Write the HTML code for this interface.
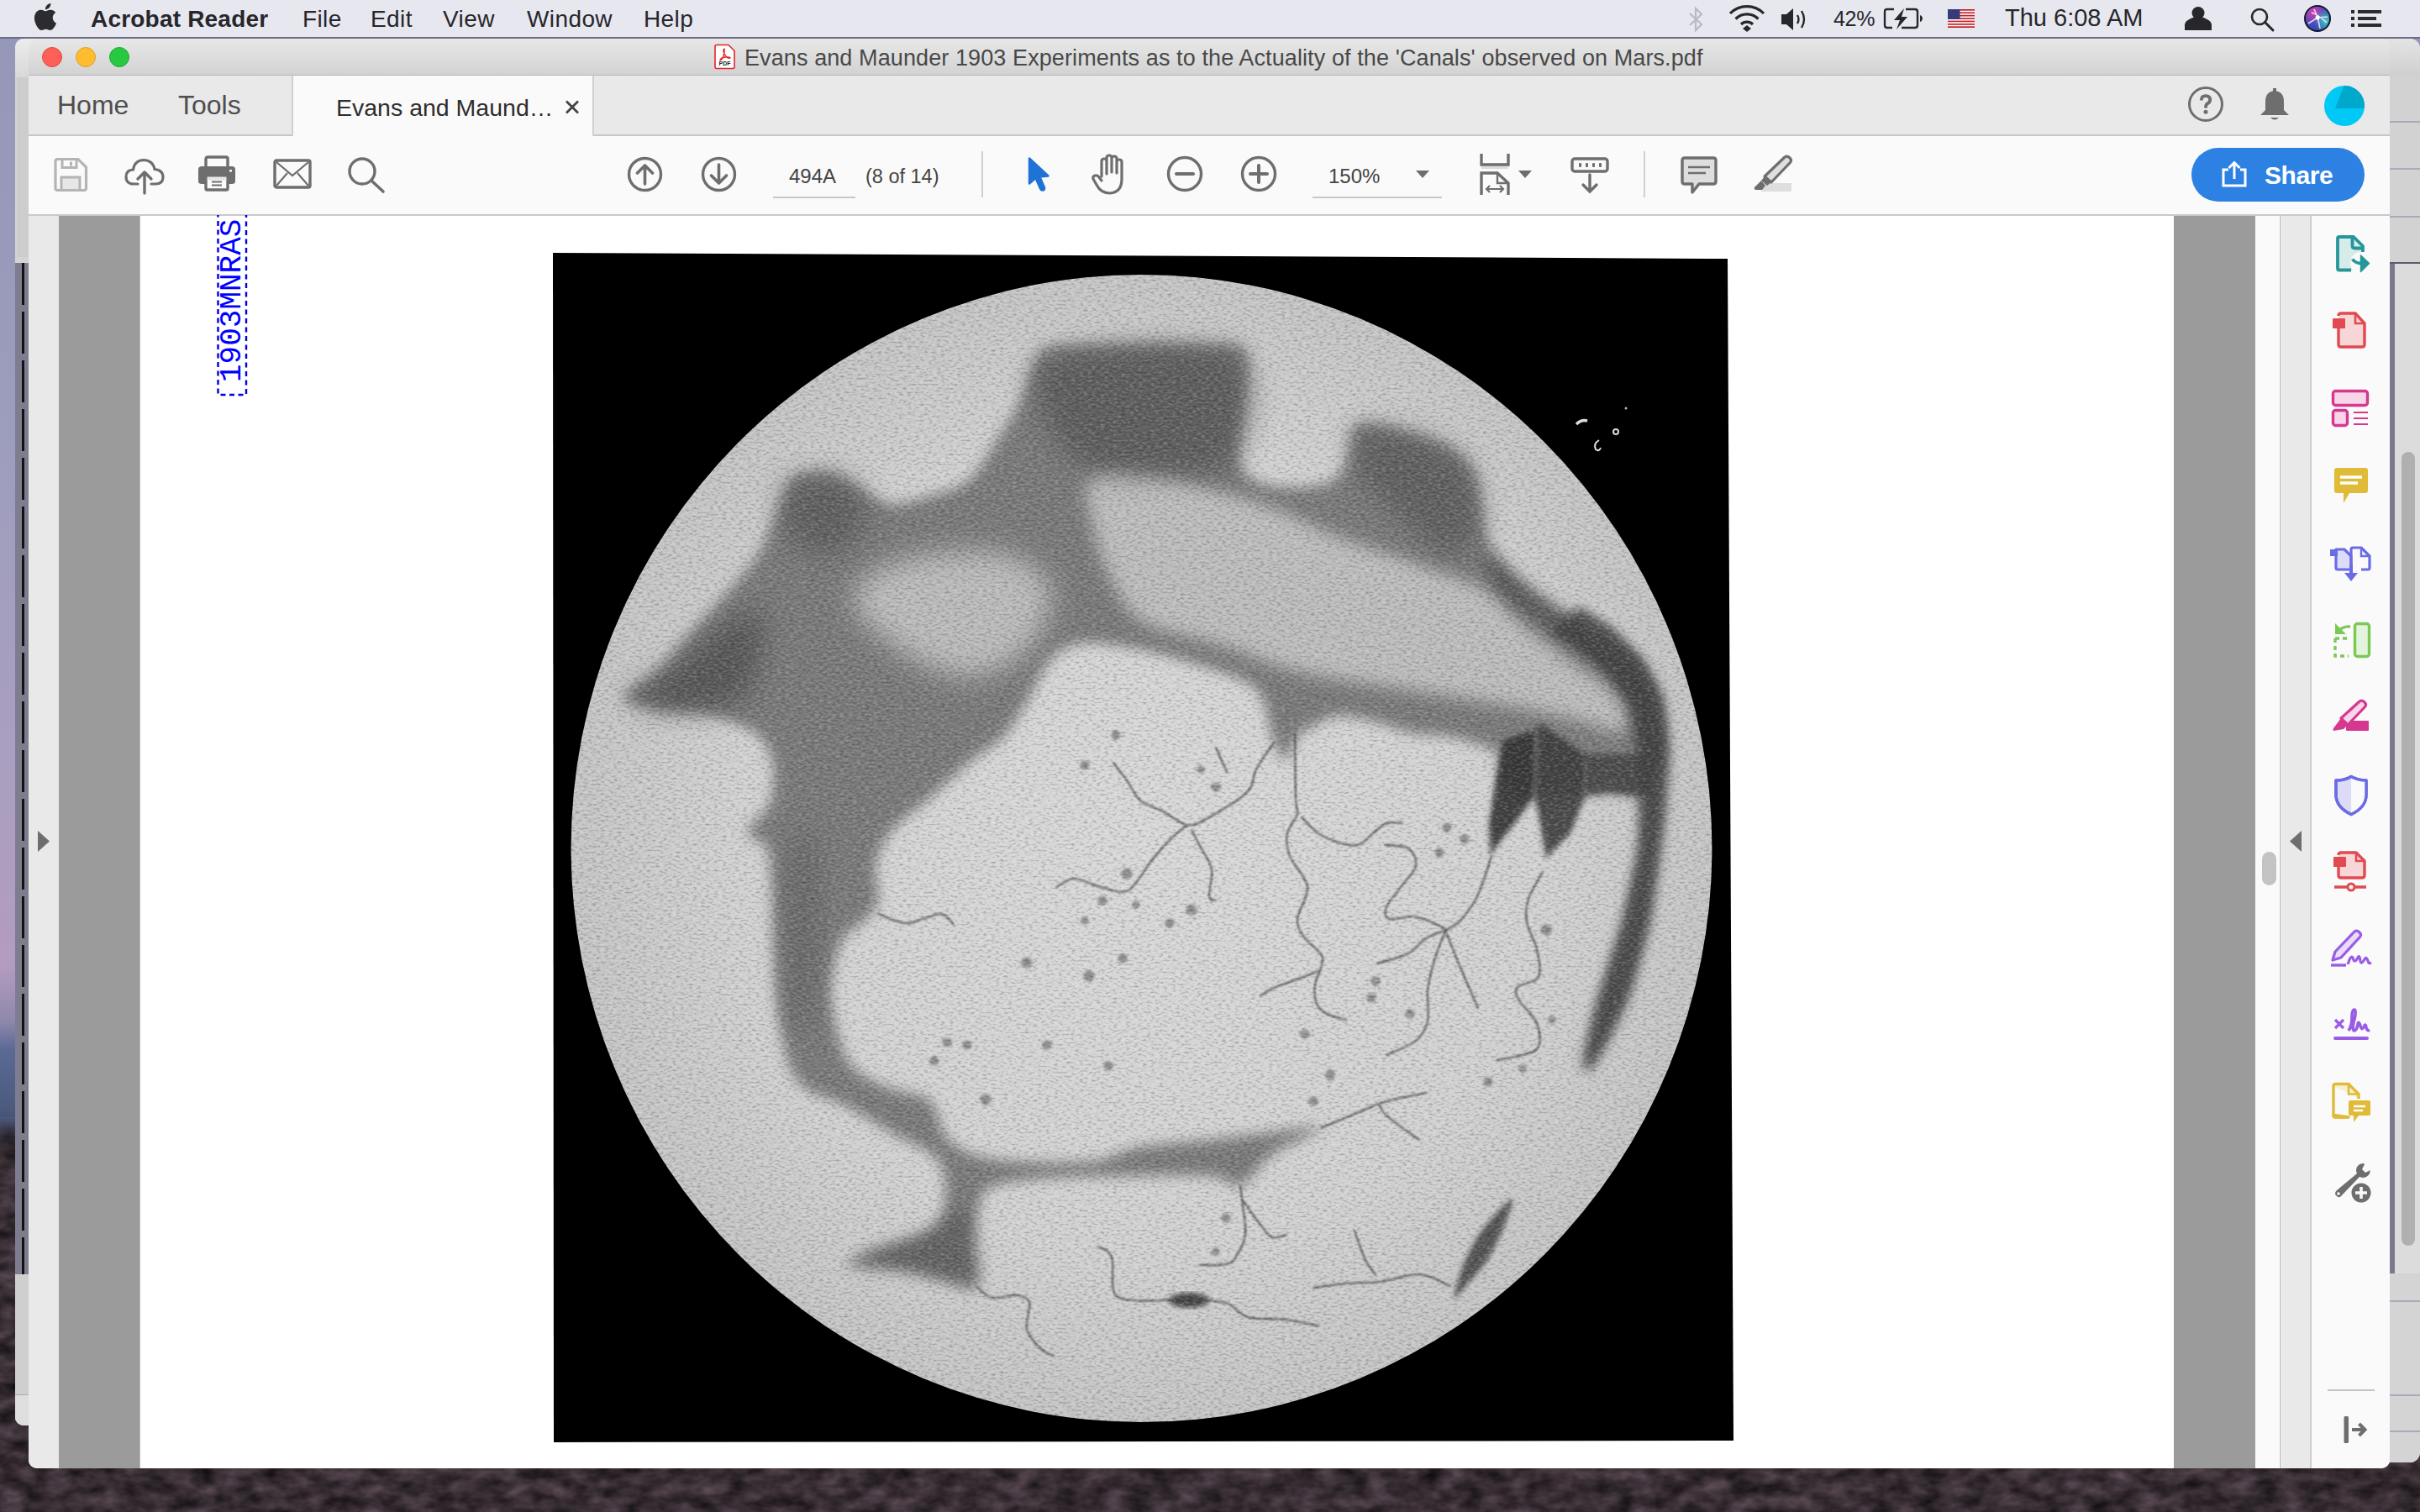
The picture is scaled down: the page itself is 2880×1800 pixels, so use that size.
<!DOCTYPE html>
<html><head><meta charset="utf-8">
<style>
*{margin:0;padding:0;box-sizing:border-box}
html,body{width:2880px;height:1800px;overflow:hidden;background:#3a3036;font-family:"Liberation Sans",sans-serif}
.a{position:absolute}
.t{position:absolute;line-height:1;white-space:nowrap}
svg{position:absolute;overflow:visible}
</style></head><body>
<!-- desktop -->
<div class="a" style="left:0;top:0;width:2880px;height:1800px;background:linear-gradient(180deg,#9497b8 0px,#9c9dbd 500px,#aa9fc0 900px,#b39cbf 1150px,#9088ac 1215px,#5a6a94 1250px,#4c5a7e 1320px,#3f343b 1370px,#3a2e34 1800px)"></div>
<svg style="left:0;top:1330px" width="2880" height="470" viewBox="0 0 2880 470"><defs><filter id="rock" x="0" y="0" width="100%" height="100%" color-interpolation-filters="sRGB"><feTurbulence type="fractalNoise" baseFrequency="0.035 0.06" numOctaves="3" seed="11"/><feColorMatrix type="matrix" values="0 0 0 0.42 0.01  0 0 0 0.34 0.01  0 0 0 0.39 0.01  0 0 0 0 1"/></filter><linearGradient id="rockfade" x1="0" y1="0" x2="0" y2="1"><stop offset="0" stop-color="#4b5a80"/><stop offset="0.08" stop-color="#3a3036" stop-opacity="0"/></linearGradient></defs><rect width="2880" height="470" fill="#3a2f35"/><rect width="2880" height="470" filter="url(#rock)" opacity="0.9"/><rect width="2880" height="470" fill="url(#rockfade)"/></svg>

<!-- background window left -->
<div class="a" style="left:18px;top:46px;width:40px;height:1651px;border-radius:10px 0 0 10px;overflow:hidden;background:#d4d4d4">
  <div class="a" style="left:0;top:0;width:40px;height:46px;background:linear-gradient(#ececec,#d8d8d8)"></div>
  <div class="a" style="left:2px;top:46px;width:38px;height:214px;background:#cdcdcd;border-right:1px solid #b0b0b0"></div>
  <div class="a" style="left:0;top:267px;width:40px;height:1204px;background:#7e7d90"></div>
  <div class="a" style="left:8px;top:267px;width:3px;height:1204px;background:repeating-linear-gradient(180deg,#111 0 50px,transparent 50px 58px)"></div>
  <div class="a" style="left:0;top:1471px;width:40px;height:180px;background:#cfcfcf"></div>
  <div class="a" style="left:0;top:1614px;width:40px;height:37px;background:#dedede;border-top:1px solid #a8a8b8"></div>
</div>
<!-- background window right -->
<div class="a" style="left:2800px;top:46px;width:80px;height:1695px;border-radius:0 12px 12px 0;overflow:hidden;background:#d6d6d6">
  <div class="a" style="left:0;top:0;width:80px;height:45px;background:linear-gradient(#e4e4e4,#cfcfcf)"></div>
  <div class="a" style="left:0;top:45px;width:80px;height:222px;background:#d2d2d2"></div>
  <div class="a" style="left:0;top:98px;width:80px;height:2px;background:#a9a9bd"></div>
  <div class="a" style="left:0;top:154px;width:80px;height:2px;background:#a9a9bd"></div>
  <div class="a" style="left:0;top:211px;width:80px;height:2px;background:#a9a9bd"></div>
  <div class="a" style="left:0;top:266px;width:80px;height:2px;background:#5a5a70"></div>
  <div class="a" style="left:44px;top:268px;width:6px;height:1202px;background:#7a7a8e"></div>
  <div class="a" style="left:50px;top:268px;width:30px;height:1202px;background:#dcdcdc"></div>
  <div class="a" style="left:58px;top:492px;width:16px;height:945px;border-radius:8px;background:#b0b0b0"></div>
  <div class="a" style="left:0;top:1470px;width:80px;height:225px;background:#d4d4d4"></div>
  <div class="a" style="left:0;top:1502px;width:80px;height:2px;background:#a9a9bd"></div>
  <div class="a" style="left:0;top:1614px;width:80px;height:2px;background:#a9a9bd"></div>
  <div class="a" style="left:0;top:1657px;width:80px;height:2px;background:#a9a9bd"></div>
</div>

<!-- menubar -->
<div class="a" style="left:0;top:0;width:2880px;height:44px;background:#e7e7ef"></div>
<div class="a" style="left:0;top:44px;width:2880px;height:2px;background:#6c6c86"></div>

<!-- main window -->
<div class="a" id="win" style="left:34px;top:46px;width:2810px;height:1702px;border-radius:10px;overflow:hidden;background:#fafafa">
  <!-- titlebar -->
  <div class="a" style="left:0;top:0;width:2810px;height:44px;background:linear-gradient(#e8e8e8,#d2d2d2);border-bottom:1px solid #b5b5b5"></div>
  <!-- tabbar -->
  <div class="a" style="left:0;top:44px;width:2810px;height:72px;background:#e9e9e9;border-bottom:2px solid #c6c6c6"></div>
  <div class="a" style="left:313px;top:44px;width:360px;height:74px;background:#fafafa;border-left:2px solid #cfcfcf;border-right:2px solid #cfcfcf"></div>
  <!-- toolbar -->
  <div class="a" style="left:0;top:116px;width:2810px;height:95px;background:#fafafa;border-bottom:2px solid #c9c9c9"></div>
  <div class="a" style="left:315px;top:113px;width:356px;height:5px;background:#fafafa"></div>
  <!-- document area -->
  <div class="a" style="left:0;top:211px;width:36px;height:1491px;background:#e9e9e9"></div>
  <div class="a" style="left:36px;top:211px;width:96px;height:1491px;background:#9b9b9b"></div>
  <div class="a" style="left:132px;top:211px;width:2421px;height:1491px;background:#ffffff;border-left:1px solid #b9b9b9"></div>
  <div class="a" style="left:2553px;top:211px;width:97px;height:1491px;background:#9b9b9b"></div>
  <div class="a" style="left:2650px;top:211px;width:31px;height:1491px;background:#fafafa;border-right:2px solid #cdcdcd"></div>
  <div class="a" style="left:2682px;top:211px;width:35px;height:1491px;background:#e9e9e9;border-right:2px solid #cdcdcd"></div>
  <div class="a" style="left:2719px;top:211px;width:91px;height:1491px;background:#fafafa"></div>
</div>
<!--MARS-->
<svg class="a" style="left:0;top:0" width="2880" height="1800" viewBox="0 0 2880 1800">
<defs>
<filter id="b3" x="-10%" y="-10%" width="120%" height="120%"><feGaussianBlur stdDeviation="3"/></filter>
<filter id="b6" x="-10%" y="-10%" width="120%" height="120%"><feGaussianBlur stdDeviation="6"/></filter>
<filter id="b8" x="-10%" y="-10%" width="120%" height="120%"><feGaussianBlur stdDeviation="8"/></filter>
<filter id="b10" x="-20%" y="-20%" width="140%" height="140%"><feGaussianBlur stdDeviation="10"/></filter>
<filter id="b16" x="-30%" y="-30%" width="160%" height="160%"><feGaussianBlur stdDeviation="16"/></filter>
<filter id="b1" x="-5%" y="-5%" width="110%" height="110%"><feGaussianBlur stdDeviation="0.8"/></filter>
<filter id="b2" x="-50%" y="-50%" width="200%" height="200%"><feGaussianBlur stdDeviation="1.8"/></filter>
<radialGradient id="dg" cx="1358" cy="1010" r="683" gradientUnits="userSpaceOnUse">
<stop offset="0" stop-color="#d8d8d8"/><stop offset="0.7" stop-color="#d1d1d1"/><stop offset="1" stop-color="#c4c4c4"/></radialGradient>
<filter id="grain" color-interpolation-filters="sRGB" filterUnits="userSpaceOnUse" x="670" y="320" width="1380" height="1380">
<feTurbulence type="fractalNoise" baseFrequency="0.2 0.42" numOctaves="2" seed="7" result="n0"/><feGaussianBlur in="n0" stdDeviation="0.6" result="n"/>
<feColorMatrix in="n" type="matrix" values="0.32 0 0 0 0.34  0.32 0 0 0 0.34  0.32 0 0 0 0.34  0 0 0 0 1" result="g"/>
<feBlend in="SourceGraphic" in2="g" mode="overlay" result="b"/>
<feComposite in="b" in2="SourceGraphic" operator="in"/>
</filter>
<clipPath id="disk"><ellipse cx="1358.5" cy="1010" rx="679" ry="683"/></clipPath>
</defs>
<polygon points="658,301 2056,308 2063,1715 659,1717" fill="#000"/>
<g fill="none" stroke="#ddd" stroke-width="2"><path d="M1876,505 Q1882,499 1889,501" stroke-width="3.5"/><circle cx="1923" cy="514" r="3"/><path d="M1903,524 Q1896,528 1899,535 Q1903,538 1905,533"/></g><circle cx="1935" cy="486" r="1.5" fill="#bbb"/>
<g filter="url(#grain)">
<ellipse cx="1358.5" cy="1010" rx="679" ry="683" fill="url(#dg)"/>
<g clip-path="url(#disk)">
<path d="M742.0,830.0 C742.0,822.2 768.3,811.2 782.0,798.0 C795.7,784.8 809.2,767.5 824.0,751.0 C838.8,734.5 857.7,714.7 871.0,699.0 C884.3,683.3 894.5,673.5 904.0,657.0 C913.5,640.5 921.0,614.8 928.0,600.0 C935.0,585.2 935.8,574.2 946.0,568.0 C956.2,561.8 975.7,560.7 989.0,563.0 C1002.3,565.3 1014.3,575.8 1026.0,582.0 C1037.7,588.2 1045.7,598.5 1059.0,600.0 C1072.3,601.5 1090.3,595.7 1106.0,591.0 C1121.7,586.3 1139.7,583.0 1153.0,572.0 C1166.3,561.0 1175.8,540.7 1186.0,525.0 C1196.2,509.3 1206.2,494.3 1214.0,478.0 C1221.8,461.7 1226.7,437.8 1233.0,427.0 C1239.3,416.2 1238.0,415.8 1252.0,413.0 C1266.0,410.2 1287.3,410.5 1317.0,410.0 C1346.7,409.5 1402.5,408.8 1430.0,410.0 C1457.5,411.2 1473.7,404.0 1482.0,417.0 C1490.3,430.0 1481.2,465.8 1480.0,488.0 C1478.8,510.2 1471.7,535.5 1475.0,550.0 C1478.3,564.5 1487.5,570.0 1500.0,575.0 C1512.5,580.0 1535.0,580.8 1550.0,580.0 C1565.0,579.2 1580.8,576.7 1590.0,570.0 C1599.2,563.3 1601.3,550.5 1605.0,540.0 C1608.7,529.5 1605.8,512.8 1612.0,507.0 C1618.2,501.2 1629.2,503.2 1642.0,505.0 C1654.8,506.8 1675.0,513.3 1689.0,518.0 C1703.0,522.7 1715.2,526.0 1726.0,533.0 C1736.8,540.0 1747.7,548.0 1754.0,560.0 C1760.3,572.0 1760.8,590.5 1764.0,605.0 C1767.2,619.5 1766.0,632.8 1773.0,647.0 C1780.0,661.2 1792.7,677.3 1806.0,690.0 C1819.3,702.7 1837.3,712.8 1853.0,723.0 C1868.7,733.2 1886.0,742.5 1900.0,751.0 C1914.0,759.5 1926.0,764.7 1937.0,774.0 C1948.0,783.3 1958.8,794.5 1966.0,807.0 C1973.2,819.5 1977.0,833.3 1980.0,849.0 C1983.0,864.7 1983.8,882.5 1984.0,901.0 C1984.2,919.5 1982.5,941.3 1981.0,960.0 C1979.5,978.7 1978.2,989.7 1975.0,1013.0 C1971.8,1036.3 1968.5,1070.5 1962.0,1100.0 C1955.5,1129.5 1944.3,1166.7 1936.0,1190.0 C1927.7,1213.3 1919.7,1225.8 1912.0,1240.0 C1904.3,1254.2 1894.7,1271.3 1890.0,1275.0 C1885.3,1278.7 1882.3,1274.8 1884.0,1262.0 C1885.7,1249.2 1892.2,1225.0 1900.0,1198.0 C1907.8,1171.0 1922.7,1130.8 1931.0,1100.0 C1939.3,1069.2 1946.5,1036.3 1950.0,1013.0 C1953.5,989.7 1953.7,971.0 1952.0,960.0 C1950.3,949.0 1950.3,949.5 1940.0,947.0 C1929.7,944.5 1903.3,944.8 1890.0,945.0 C1876.7,945.2 1870.0,947.2 1860.0,948.0 C1850.0,948.8 1840.0,950.5 1830.0,950.0 C1820.0,949.5 1807.5,950.0 1800.0,945.0 C1792.5,940.0 1788.3,928.3 1785.0,920.0 C1781.7,911.7 1789.7,902.2 1780.0,895.0 C1770.3,887.8 1743.3,880.7 1727.0,877.0 C1710.7,873.3 1697.2,876.0 1682.0,873.0 C1666.8,870.0 1651.2,862.5 1636.0,859.0 C1620.8,855.5 1602.3,851.5 1591.0,852.0 C1579.7,852.5 1575.7,858.2 1568.0,862.0 C1560.3,865.8 1551.3,867.8 1545.0,875.0 C1538.7,882.2 1535.0,904.2 1530.0,905.0 C1525.0,905.8 1518.7,889.2 1515.0,880.0 C1511.3,870.8 1510.5,858.8 1508.0,850.0 C1505.5,841.2 1505.2,833.8 1500.0,827.0 C1494.8,820.2 1492.2,815.8 1477.0,809.0 C1461.8,802.2 1431.7,792.5 1409.0,786.0 C1386.3,779.5 1361.8,773.3 1341.0,770.0 C1320.2,766.7 1299.2,763.3 1284.0,766.0 C1268.8,768.7 1261.2,773.0 1250.0,786.0 C1238.8,799.0 1226.8,828.3 1217.0,844.0 C1207.2,859.7 1200.7,870.2 1191.0,880.0 C1181.3,889.8 1173.2,891.3 1159.0,903.0 C1144.8,914.7 1122.5,935.5 1106.0,950.0 C1089.5,964.5 1070.7,976.7 1060.0,990.0 C1049.3,1003.3 1044.5,1016.7 1042.0,1030.0 C1039.5,1043.3 1047.0,1059.2 1045.0,1070.0 C1043.0,1080.8 1037.0,1087.0 1030.0,1095.0 C1023.0,1103.0 1009.8,1104.8 1003.0,1118.0 C996.2,1131.2 989.8,1154.5 989.0,1174.0 C988.2,1193.5 993.3,1218.5 998.0,1235.0 C1002.7,1251.5 1006.8,1262.8 1017.0,1273.0 C1027.2,1283.2 1044.2,1289.8 1059.0,1296.0 C1073.8,1302.2 1094.3,1299.8 1106.0,1310.0 C1117.7,1320.2 1116.5,1345.3 1129.0,1357.0 C1141.5,1368.7 1153.0,1375.7 1181.0,1380.0 C1209.0,1384.3 1268.0,1385.3 1297.0,1383.0 C1326.0,1380.7 1330.8,1370.3 1355.0,1366.0 C1379.2,1361.7 1415.5,1360.0 1442.0,1357.0 C1468.5,1354.0 1492.3,1350.3 1514.0,1348.0 C1535.7,1345.7 1572.0,1338.7 1572.0,1343.0 C1572.0,1347.3 1530.0,1362.5 1514.0,1374.0 C1498.0,1385.5 1488.0,1407.7 1476.0,1412.0 C1464.0,1416.3 1467.0,1402.0 1442.0,1400.0 C1417.0,1398.0 1359.8,1399.5 1326.0,1400.0 C1292.2,1400.5 1263.2,1401.0 1239.0,1403.0 C1214.8,1405.0 1193.0,1407.7 1181.0,1412.0 C1169.0,1416.3 1170.8,1417.5 1167.0,1429.0 C1163.2,1440.5 1158.5,1463.7 1158.0,1481.0 C1157.5,1498.3 1169.7,1525.7 1164.0,1533.0 C1158.3,1540.3 1140.3,1528.8 1124.0,1525.0 C1107.7,1521.2 1085.3,1513.0 1066.0,1510.0 C1046.7,1507.0 1012.8,1510.3 1008.0,1507.0 C1003.2,1503.7 1022.5,1496.2 1037.0,1490.0 C1051.5,1483.8 1081.0,1477.2 1095.0,1470.0 C1109.0,1462.8 1116.2,1458.7 1121.0,1447.0 C1125.8,1435.3 1126.0,1412.2 1124.0,1400.0 C1122.0,1387.8 1118.7,1382.2 1109.0,1374.0 C1099.3,1365.8 1082.8,1360.5 1066.0,1351.0 C1049.2,1341.5 1027.3,1327.5 1008.0,1317.0 C988.7,1306.5 963.3,1304.0 950.0,1288.0 C936.7,1272.0 932.8,1243.8 928.0,1221.0 C923.2,1198.2 922.7,1178.3 921.0,1151.0 C919.3,1123.7 919.3,1080.5 918.0,1057.0 C916.7,1033.5 917.7,1021.2 913.0,1010.0 C908.3,998.8 889.5,998.8 890.0,990.0 C890.5,981.2 911.0,970.3 916.0,957.0 C921.0,943.7 922.0,923.3 920.0,910.0 C918.0,896.7 912.2,885.5 904.0,877.0 C895.8,868.5 882.0,863.7 871.0,859.0 C860.0,854.3 852.8,851.3 838.0,849.0 C823.2,846.7 798.0,848.2 782.0,845.0 C766.0,841.8 742.0,837.8 742.0,830.0Z" fill="#7a7a7a" filter="url(#b8)"/>
<path d="M1027.0,690.0 C1038.0,679.8 1062.0,669.7 1085.0,664.0 C1108.0,658.3 1143.0,655.5 1165.0,656.0 C1187.0,656.5 1203.0,660.0 1217.0,667.0 C1231.0,674.0 1244.5,686.2 1249.0,698.0 C1253.5,709.8 1249.3,724.7 1244.0,738.0 C1238.7,751.3 1230.2,767.0 1217.0,778.0 C1203.8,789.0 1182.5,801.0 1165.0,804.0 C1147.5,807.0 1129.7,802.5 1112.0,796.0 C1094.3,789.5 1074.5,776.8 1059.0,765.0 C1043.5,753.2 1024.3,737.5 1019.0,725.0 C1013.7,712.5 1016.0,700.2 1027.0,690.0Z" fill="#bababa" filter="url(#b16)"/>
<path d="M1297.0,570.0 C1306.7,558.5 1326.0,558.0 1360.0,563.0 C1394.0,568.0 1461.8,587.2 1501.0,600.0 C1540.2,612.8 1563.7,628.0 1595.0,640.0 C1626.3,652.0 1657.8,660.7 1689.0,672.0 C1720.2,683.3 1755.2,694.7 1782.0,708.0 C1808.8,721.3 1830.3,739.7 1850.0,752.0 C1869.7,764.3 1886.3,771.0 1900.0,782.0 C1913.7,793.0 1924.5,806.3 1932.0,818.0 C1939.5,829.7 1945.3,843.0 1945.0,852.0 C1944.7,861.0 1940.8,871.0 1930.0,872.0 C1919.2,873.0 1900.7,863.0 1880.0,858.0 C1859.3,853.0 1837.8,847.8 1806.0,842.0 C1774.2,836.2 1732.0,830.0 1689.0,823.0 C1646.0,816.0 1587.2,809.2 1548.0,800.0 C1508.8,790.8 1485.3,778.0 1454.0,768.0 C1422.7,758.0 1381.8,753.0 1360.0,740.0 C1338.2,727.0 1332.7,708.0 1323.0,690.0 C1313.3,672.0 1306.3,652.0 1302.0,632.0 C1297.7,612.0 1287.3,581.5 1297.0,570.0Z" fill="#bcbcbc" filter="url(#b10)"/>
<path d="M1250.0,425.0 C1287.5,412.0 1433.0,402.0 1470.0,422.0 C1507.0,442.0 1483.7,521.2 1472.0,545.0 C1460.3,568.8 1428.7,562.5 1400.0,565.0 C1371.3,567.5 1325.8,570.8 1300.0,560.0 C1274.2,549.2 1253.3,522.5 1245.0,500.0 C1236.7,477.5 1212.5,438.0 1250.0,425.0Z" fill="#4a4a4a" opacity="0.55" filter="url(#b16)"/>
<path d="M1618.0,512.0 C1632.2,505.7 1678.0,514.0 1700.0,522.0 C1722.0,530.0 1740.0,542.0 1750.0,560.0 C1760.0,578.0 1765.0,613.3 1760.0,630.0 C1755.0,646.7 1738.3,665.0 1720.0,660.0 C1701.7,655.0 1667.5,616.7 1650.0,600.0 C1632.5,583.3 1620.3,574.7 1615.0,560.0 C1609.7,545.3 1603.8,518.3 1618.0,512.0Z" fill="#4a4a4a" opacity="0.5" filter="url(#b16)"/>
<path d="M1770.0,660.0 C1780.0,660.8 1822.5,705.0 1850.0,725.0 C1877.5,745.0 1914.2,759.2 1935.0,780.0 C1955.8,800.8 1967.8,826.7 1975.0,850.0 C1982.2,873.3 1981.3,910.8 1978.0,920.0 C1974.7,929.2 1963.8,920.0 1955.0,905.0 C1946.2,890.0 1940.8,850.8 1925.0,830.0 C1909.2,809.2 1882.5,798.3 1860.0,780.0 C1837.5,761.7 1805.0,740.0 1790.0,720.0 C1775.0,700.0 1760.0,659.2 1770.0,660.0Z" fill="#3a3a3a" opacity="0.55" filter="url(#b10)"/>
<path d="M935.0,575.0 C946.7,563.3 994.2,562.5 1010.0,570.0 C1025.8,577.5 1033.3,605.0 1030.0,620.0 C1026.7,635.0 1005.0,656.7 990.0,660.0 C975.0,663.3 949.2,654.2 940.0,640.0 C930.8,625.8 923.3,586.7 935.0,575.0Z" fill="#4a4a4a" opacity="0.5" filter="url(#b16)"/>
<path d="M752.0,830.0 C752.0,821.2 782.0,809.2 800.0,795.0 C818.0,780.8 842.5,755.8 860.0,745.0 C877.5,734.2 898.3,720.8 905.0,730.0 C911.7,739.2 905.8,781.7 900.0,800.0 C894.2,818.3 886.7,832.0 870.0,840.0 C853.3,848.0 819.7,849.7 800.0,848.0 C780.3,846.3 752.0,838.8 752.0,830.0Z" fill="#3e3e3e" opacity="0.55" filter="url(#b16)"/>
<path d="M1020.0,1500.0 C1020.0,1492.5 1078.3,1480.0 1100.0,1470.0 C1121.7,1460.0 1140.0,1431.7 1150.0,1440.0 C1160.0,1448.3 1168.3,1507.5 1160.0,1520.0 C1151.7,1532.5 1123.3,1518.3 1100.0,1515.0 C1076.7,1511.7 1020.0,1507.5 1020.0,1500.0Z" fill="#4a4a4a" opacity="0.45" filter="url(#b10)"/>
<path d="M940.0,1010.0 C945.8,993.3 964.2,976.7 970.0,1000.0 C975.8,1023.3 976.7,1111.7 975.0,1150.0 C973.3,1188.3 965.8,1221.7 960.0,1230.0 C954.2,1238.3 944.2,1221.7 940.0,1200.0 C935.8,1178.3 935.0,1131.7 935.0,1100.0 C935.0,1068.3 934.2,1026.7 940.0,1010.0Z" fill="#555555" opacity="0.4" filter="url(#b16)"/>
<polygon points="1789,882 1827,869 1825,949 1802,981 1785,1002 1774,1019 1772,981 1780,928" fill="#333" opacity="0.9" filter="url(#b3)"/>
<polygon points="1831,860 1886,898 1886,949 1869,992 1848,1013 1840,1023 1835,992 1827,949" fill="#3e3e3e" opacity="0.9" filter="url(#b3)"/>
<polygon points="1886,898 1965,898 1965,945 1943,947 1912,943 1890,947 1886,949" fill="#4a4a4a" opacity="0.9" filter="url(#b3)"/>
<polygon points="1880,722 1918,746 1955,785 1978,830 1984,886 1981,960 1975,1013 1962,1100 1940,1180 1912,1240 1890,1275 1886,1262 1900,1198 1931,1100 1950,1013 1952,960 1950,880 1940,838 1915,805 1880,775 1845,752" fill="#404040" opacity="0.8" filter="url(#b6)"/>
<g fill="none" stroke="#5a5a5a" stroke-width="2.1" stroke-linecap="round" filter="url(#b1)">
<path d="M1325.0,908.0 C1327.7,911.5 1335.7,921.5 1341.0,929.0 C1346.3,936.5 1349.8,946.8 1357.0,953.0 C1364.2,959.2 1374.7,961.2 1384.0,966.0 C1393.3,970.8 1404.2,980.7 1413.0,982.0 C1421.8,983.3 1425.2,980.5 1437.0,974.0 C1448.8,967.5 1474.3,952.7 1484.0,943.0 C1493.7,933.3 1489.7,925.8 1495.0,916.0 C1500.3,906.2 1512.5,889.3 1516.0,884.0"/>
<path d="M1413.0,982.0 C1409.8,984.7 1401.2,990.8 1394.0,998.0 C1386.8,1005.2 1377.0,1016.2 1370.0,1025.0 C1363.0,1033.8 1357.7,1044.8 1352.0,1051.0 C1346.3,1057.2 1344.0,1061.5 1336.0,1062.0 C1328.0,1062.5 1313.7,1056.7 1304.0,1054.0 C1294.3,1051.3 1285.8,1045.7 1278.0,1046.0 C1270.2,1046.3 1260.5,1054.3 1257.0,1056.0"/>
<path d="M1418.0,988.0 C1419.8,991.5 1425.0,1001.2 1429.0,1009.0 C1433.0,1016.8 1440.3,1025.3 1442.0,1035.0 C1443.7,1044.7 1438.2,1060.8 1439.0,1067.0 C1439.8,1073.2 1445.7,1071.2 1447.0,1072.0"/>
<path d="M1447.0,890.0 C1449.2,894.8 1457.8,914.2 1460.0,919.0"/>
<path d="M1541.0,872.0 C1541.2,885.0 1541.5,933.8 1542.0,950.0 C1542.5,966.2 1545.7,962.0 1544.0,969.0 C1542.3,976.0 1533.5,983.7 1532.0,992.0 C1530.5,1000.3 1531.0,1008.3 1535.0,1019.0 C1539.0,1029.7 1554.5,1043.5 1556.0,1056.0 C1557.5,1068.5 1544.5,1083.8 1544.0,1094.0 C1543.5,1104.2 1548.0,1109.3 1553.0,1117.0 C1558.0,1124.7 1572.0,1130.8 1574.0,1140.0 C1576.0,1149.2 1566.2,1162.8 1565.0,1172.0 C1563.8,1181.2 1564.7,1189.2 1567.0,1195.0 C1569.3,1200.8 1573.2,1203.8 1579.0,1207.0 C1584.8,1210.2 1598.2,1212.8 1602.0,1214.0"/>
<path d="M1569.0,1156.0 C1565.2,1157.5 1555.2,1161.5 1546.0,1165.0 C1536.8,1168.5 1521.7,1173.5 1514.0,1177.0 C1506.3,1180.5 1502.3,1184.5 1500.0,1186.0"/>
<path d="M1549.0,973.0 C1552.3,976.2 1561.7,987.0 1569.0,992.0 C1576.3,997.0 1585.2,1000.7 1593.0,1003.0 C1600.8,1005.3 1609.2,1007.8 1616.0,1006.0 C1622.8,1004.2 1628.3,996.3 1634.0,992.0 C1639.7,987.7 1644.2,982.0 1650.0,980.0 C1655.8,978.0 1665.8,980.0 1669.0,980.0"/>
<path d="M1648.0,1006.0 C1652.7,1006.7 1669.8,1005.8 1676.0,1010.0 C1682.2,1014.2 1686.5,1023.3 1685.0,1031.0 C1683.5,1038.7 1672.8,1047.8 1667.0,1056.0 C1661.2,1064.2 1652.3,1073.7 1650.0,1080.0 C1647.7,1086.3 1647.8,1092.2 1653.0,1094.0 C1658.2,1095.8 1672.5,1090.3 1681.0,1091.0 C1689.5,1091.7 1697.2,1095.3 1704.0,1098.0 C1710.8,1100.7 1719.0,1105.5 1722.0,1107.0"/>
<path d="M1775.0,1019.0 C1773.5,1023.7 1769.3,1038.0 1766.0,1047.0 C1762.7,1056.0 1760.0,1064.5 1755.0,1073.0 C1750.0,1081.5 1741.5,1092.3 1736.0,1098.0 C1730.5,1103.7 1725.8,1102.3 1722.0,1107.0 C1718.2,1111.7 1716.0,1118.2 1713.0,1126.0 C1710.0,1133.8 1706.3,1144.8 1704.0,1154.0 C1701.7,1163.2 1699.8,1170.7 1699.0,1181.0 C1698.2,1191.3 1701.3,1206.3 1699.0,1216.0 C1696.7,1225.7 1693.2,1232.3 1685.0,1239.0 C1676.8,1245.7 1655.8,1253.2 1650.0,1256.0"/>
<path d="M1722.0,1107.0 C1717.8,1108.7 1704.7,1112.3 1697.0,1117.0 C1689.3,1121.7 1685.7,1130.0 1676.0,1135.0 C1666.3,1140.0 1645.2,1145.0 1639.0,1147.0"/>
<path d="M1722.0,1112.0 C1724.3,1117.8 1729.8,1132.3 1736.0,1147.0 C1742.2,1161.7 1755.2,1191.2 1759.0,1200.0"/>
<path d="M1836.0,1038.0 C1833.2,1043.3 1822.2,1060.0 1819.0,1070.0 C1815.8,1080.0 1815.3,1088.0 1817.0,1098.0 C1818.7,1108.0 1826.7,1119.2 1829.0,1130.0 C1831.3,1140.8 1834.8,1155.5 1831.0,1163.0 C1827.2,1170.5 1809.8,1170.3 1806.0,1175.0 C1802.2,1179.7 1804.2,1183.8 1808.0,1191.0 C1811.8,1198.2 1825.2,1208.8 1829.0,1218.0 C1832.8,1227.2 1833.8,1239.7 1831.0,1246.0 C1828.2,1252.3 1820.2,1253.3 1812.0,1256.0 C1803.8,1258.7 1787.0,1261.0 1782.0,1262.0"/>
<path d="M1045.0,1088.0 C1050.7,1089.8 1066.7,1099.0 1079.0,1099.0 C1091.3,1099.0 1109.7,1087.7 1119.0,1088.0 C1128.3,1088.3 1132.3,1098.8 1135.0,1101.0"/>
<path d="M1164.0,1533.0 C1166.8,1535.0 1173.3,1543.5 1181.0,1545.0 C1188.7,1546.5 1202.7,1541.0 1210.0,1542.0 C1217.3,1543.0 1223.0,1544.2 1225.0,1551.0 C1227.0,1557.8 1219.7,1573.8 1222.0,1583.0 C1224.3,1592.2 1233.7,1600.8 1239.0,1606.0 C1244.3,1611.2 1251.5,1612.7 1254.0,1614.0"/>
<path d="M1306.0,1484.0 C1308.8,1486.0 1319.7,1486.8 1323.0,1496.0 C1326.3,1505.2 1321.7,1530.3 1326.0,1539.0 C1330.3,1547.7 1339.3,1546.5 1349.0,1548.0 C1358.7,1549.5 1372.3,1548.0 1384.0,1548.0 C1395.7,1548.0 1406.5,1547.5 1419.0,1548.0 C1431.5,1548.5 1448.0,1547.7 1459.0,1551.0 C1470.0,1554.3 1473.3,1564.7 1485.0,1568.0 C1496.7,1571.3 1515.0,1569.3 1529.0,1571.0 C1543.0,1572.7 1562.3,1576.8 1569.0,1578.0"/>
<path d="M1476.0,1412.0 C1476.5,1415.8 1478.0,1425.3 1479.0,1435.0 C1480.0,1444.7 1483.3,1459.8 1482.0,1470.0 C1480.7,1480.2 1474.8,1490.2 1471.0,1496.0 C1467.2,1501.8 1466.3,1503.3 1459.0,1505.0 C1451.7,1506.7 1432.3,1505.8 1427.0,1506.0"/>
<path d="M1479.0,1429.0 C1482.5,1433.8 1494.2,1450.7 1500.0,1458.0 C1505.8,1465.3 1508.8,1471.0 1514.0,1473.0 C1519.2,1475.0 1528.2,1470.5 1531.0,1470.0"/>
<path d="M1563.0,1533.0 C1569.3,1532.2 1587.8,1529.2 1601.0,1528.0 C1614.2,1526.8 1627.3,1527.8 1642.0,1526.0 C1656.7,1524.2 1675.0,1516.2 1689.0,1517.0 C1703.0,1517.8 1719.8,1528.7 1726.0,1531.0"/>
<path d="M1612.0,1465.0 C1614.2,1470.8 1620.8,1491.3 1625.0,1500.0 C1629.2,1508.7 1635.0,1514.2 1637.0,1517.0"/>
<path d="M1572.0,1343.0 C1579.2,1340.0 1602.0,1330.3 1615.0,1325.0 C1628.0,1319.7 1636.2,1315.0 1650.0,1311.0 C1663.8,1307.0 1690.0,1302.7 1698.0,1301.0"/>
<path d="M1642.0,1316.0 C1643.5,1318.2 1643.2,1322.2 1651.0,1329.0 C1658.8,1335.8 1682.7,1352.3 1689.0,1357.0"/>
</g>
<g fill="#8e8e8e" filter="url(#b2)"><circle cx="1328" cy="875" r="5.8"/><circle cx="1291" cy="911" r="5.8"/><circle cx="1341" cy="1040" r="6.8"/><circle cx="1312" cy="1072" r="5.8"/><circle cx="1291" cy="1096" r="4.8"/><circle cx="1418" cy="1083" r="6.8"/><circle cx="1352" cy="1077" r="4.8"/><circle cx="1392" cy="1099" r="5.8"/><circle cx="1222" cy="1146" r="6.8"/><circle cx="1336" cy="1141" r="5.8"/><circle cx="1296" cy="1162" r="6.8"/><circle cx="1127" cy="1241" r="5.8"/><circle cx="1151" cy="1244" r="5.8"/><circle cx="1246" cy="1244" r="5.8"/><circle cx="1553" cy="1231" r="5.8"/><circle cx="1447" cy="937" r="5.8"/><circle cx="1429" cy="916" r="4.8"/><circle cx="1722" cy="985" r="5.8"/><circle cx="1743" cy="999" r="5.8"/><circle cx="1713" cy="1015" r="5.8"/><circle cx="1637" cy="1168" r="5.8"/><circle cx="1632" cy="1188" r="5.8"/><circle cx="1678" cy="1207" r="5.8"/><circle cx="1840" cy="1107" r="6.8"/><circle cx="1847" cy="1214" r="4.8"/><circle cx="1812" cy="1272" r="4.8"/><circle cx="1771" cy="1288" r="5.8"/><circle cx="1583" cy="1279" r="5.8"/><circle cx="1112" cy="1263" r="5.8"/><circle cx="1173" cy="1309" r="6.8"/><circle cx="1319" cy="1269" r="5.8"/><circle cx="1459" cy="1450" r="5.8"/><circle cx="1447" cy="1490" r="4.8"/><circle cx="1563" cy="1311" r="5.8"/><circle cx="1583" cy="1282" r="4.8"/></g>
<path d="M1800.0,1428.0 C1800.8,1431.3 1795.0,1448.0 1790.0,1460.0 C1785.0,1472.0 1777.5,1488.3 1770.0,1500.0 C1762.5,1511.7 1751.5,1522.5 1745.0,1530.0 C1738.5,1537.5 1731.8,1548.3 1731.0,1545.0 C1730.2,1541.7 1735.2,1522.5 1740.0,1510.0 C1744.8,1497.5 1752.5,1481.7 1760.0,1470.0 C1767.5,1458.3 1778.3,1447.0 1785.0,1440.0 C1791.7,1433.0 1799.2,1424.7 1800.0,1428.0Z" fill="#555" filter="url(#b3)"/>
<ellipse cx="1415" cy="1548" rx="24" ry="9" fill="#444" filter="url(#b3)"/>
</g>
</g>
</svg>
<!--/MARS-->
<!--CHROME-->
<!-- ===== MENUBAR ===== -->
<svg style="left:38px;top:4px" width="34" height="34" viewBox="0 0 25.5 25.5"><path fill="#2b2b30" d="M12.152 6.896c-.948 0-2.415-1.078-3.96-1.04-2.04.027-3.91 1.183-4.961 3.014-2.117 3.675-.546 9.103 1.519 12.09 1.013 1.454 2.208 3.09 3.792 3.039 1.52-.065 2.09-.987 3.935-.987 1.831 0 2.35.987 3.960.948 1.637-.026 2.676-1.48 3.676-2.948 1.156-1.688 1.636-3.325 1.662-3.415-.039-.013-3.182-1.221-3.220-4.857-.026-3.040 2.480-4.494 2.597-4.559-1.429-2.090-3.623-2.324-4.390-2.376-2-.156-3.675 1.090-4.610 1.090zM15.530 3.830c.843-1.012 1.400-2.427 1.245-3.830-1.207.052-2.662.805-3.532 1.818-.780.896-1.454 2.338-1.273 3.714 1.338.104 2.715-.688 3.559-1.701"/></svg>
<div class="t" style="left:108px;top:8.5px;font-size:28px;font-weight:700;color:#26262b;letter-spacing:0.2px">Acrobat Reader</div>
<div class="t" style="left:360px;top:8.5px;font-size:28px;color:#26262b;letter-spacing:0.4px">File</div>
<div class="t" style="left:441px;top:8.5px;font-size:28px;color:#26262b;letter-spacing:0.4px">Edit</div>
<div class="t" style="left:527px;top:8.5px;font-size:28px;color:#26262b;letter-spacing:0.4px">View</div>
<div class="t" style="left:627px;top:8.5px;font-size:28px;color:#26262b;letter-spacing:0.4px">Window</div>
<div class="t" style="left:766px;top:8.5px;font-size:28px;color:#26262b;letter-spacing:0.4px">Help</div>
<!-- bluetooth -->
<svg style="left:2008px;top:6px" width="22" height="34" viewBox="0 0 22 34"><path d="M3 10 L17 23 L10 30 L10 4 L17 11 L3 24" fill="none" stroke="#b9b9c2" stroke-width="2.2" stroke-linejoin="miter"/></svg>
<!-- wifi -->
<svg style="left:2057px;top:6px" width="44" height="32" viewBox="0 0 44 32"><path d="M2 10 A28 28 0 0 1 42 10" fill="none" stroke="#26262b" stroke-width="3.2"/><path d="M8.5 16.5 A19 19 0 0 1 35.5 16.5" fill="none" stroke="#26262b" stroke-width="3.2"/><path d="M15 23 A10 10 0 0 1 29 23" fill="none" stroke="#26262b" stroke-width="3.2"/><path d="M17 28 L22 24 L27 28 L22 32Z" fill="#26262b"/></svg>
<!-- volume -->
<svg style="left:2119px;top:8px" width="36" height="30" viewBox="0 0 36 30"><path d="M1 9 H7 L15 2 V28 L7 21 H1Z" fill="#26262b"/><path d="M20 10 Q23 15 20 20" fill="none" stroke="#26262b" stroke-width="2.4"/><path d="M25 5 Q31 15 25 25" fill="none" stroke="#26262b" stroke-width="2.4"/></svg>
<div class="t" style="left:2182px;top:9.5px;font-size:25px;color:#26262b;letter-spacing:-0.3px">42%</div>
<!-- battery -->
<svg style="left:2241px;top:9px" width="50" height="26" viewBox="0 0 50 26"><path d="M13 2 H5 Q2 2 2 5 V21 Q2 24 5 24 H11" fill="none" stroke="#26262b" stroke-width="2.4"/><path d="M27 2 H38 Q41 2 41 5 V21 Q41 24 38 24 H22" fill="none" stroke="#26262b" stroke-width="2.4"/><path d="M44 9 Q47 10 47 13 Q47 16 44 17Z" fill="#26262b"/><path d="M25 1 L13 15 H20 L16 26 L29 11 H22Z" fill="#26262b"/></svg>
<!-- flag -->
<svg style="left:2318px;top:11px" width="32" height="22" viewBox="0 0 32 22"><rect width="32" height="22" fill="#fff"/><g fill="#c0202a"><rect y="0" width="32" height="1.7"/><rect y="3.4" width="32" height="1.7"/><rect y="6.8" width="32" height="1.7"/><rect y="10.2" width="32" height="1.7"/><rect y="13.6" width="32" height="1.7"/><rect y="17" width="32" height="1.7"/><rect y="20.3" width="32" height="1.7"/></g><rect width="14.5" height="12" fill="#343a7a"/></svg>
<div class="t" style="left:2386px;top:7px;font-size:29px;color:#26262b">Thu 6:08 AM</div>
<!-- user -->
<svg style="left:2599px;top:7px" width="34" height="30" viewBox="0 0 34 30"><circle cx="17" cy="8.5" r="7.5" fill="#26262b"/><path d="M17 12 C9 14 2 17 1 22 V29 H33 V22 C32 17 25 14 17 12Z" fill="#26262b"/></svg>
<!-- search -->
<svg style="left:2677px;top:9px" width="32" height="30" viewBox="0 0 32 30"><circle cx="12" cy="11" r="9" fill="none" stroke="#26262b" stroke-width="2.6"/><path d="M18.5 17.5 L28 27" stroke="#26262b" stroke-width="3" stroke-linecap="round"/></svg>
<!-- siri -->
<svg style="left:2741px;top:5px" width="34" height="34" viewBox="0 0 34 34"><defs><radialGradient id="sg1" cx="0.3" cy="0.2" r="0.6"><stop offset="0" stop-color="#d93fb0"/><stop offset="1" stop-color="#d93fb0" stop-opacity="0"/></radialGradient><radialGradient id="sg2" cx="0.85" cy="0.6" r="0.5"><stop offset="0" stop-color="#3fd0c0"/><stop offset="1" stop-color="#3fd0c0" stop-opacity="0"/></radialGradient></defs><circle cx="17" cy="17" r="16" fill="#121826"/><circle cx="17" cy="17" r="14" fill="#3a4ab8"/><circle cx="17" cy="17" r="14" fill="url(#sg1)"/><circle cx="17" cy="17" r="14" fill="url(#sg2)"/><path d="M6 23 L17 16 L29 15 M13 6 Q18 16 20 29 M10 10 Q17 12 28 22" fill="none" stroke="#f0e8ff" stroke-width="1.6" opacity="0.9"/><circle cx="17" cy="16" r="2.5" fill="#fff"/></svg>
<!-- list -->
<svg style="left:2798px;top:12px" width="36" height="20" viewBox="0 0 36 20"><rect x="0" y="0" width="4" height="4" fill="#2b2b30"/><rect x="0" y="8" width="4" height="4" fill="#2b2b30"/><rect x="0" y="16" width="4" height="4" fill="#2b2b30"/><rect x="8" y="0" width="28" height="4" fill="#2b2b30"/><rect x="8" y="8" width="22" height="4" fill="#2b2b30"/><rect x="8" y="16" width="28" height="4" fill="#2b2b30"/></svg>

<!-- ===== TITLE BAR ===== -->
<div class="a" style="left:50px;top:56px;width:24px;height:24px;border-radius:50%;background:#fe5f57;border:1px solid #e2463f"></div>
<div class="a" style="left:90px;top:56px;width:24px;height:24px;border-radius:50%;background:#febc2e;border:1px solid #e0a028"></div>
<div class="a" style="left:130px;top:56px;width:24px;height:24px;border-radius:50%;background:#28c840;border:1px solid #1eaa30"></div>
<svg style="left:849px;top:52px" width="27" height="31" viewBox="0 0 27 31"><path d="M2 3 Q2 1.5 3.5 1.5 H18 L25 8.5 V28 Q25 29.5 23.5 29.5 H3.5 Q2 29.5 2 28Z" fill="#fff" stroke="#e0262a" stroke-width="1.6"/><path d="M13 6 Q11 7 12.5 11 Q13.8 14 17 17 Q20 18 20 16.5 Q19 15.5 14 16 Q9 17 8 19 Q7.5 20 9 19.5 Q11 18 12.5 12.5 Q13.5 8 13 6Z" fill="none" stroke="#e0262a" stroke-width="1.3"/><text x="13.5" y="26" font-family="Liberation Sans" font-size="7" font-weight="700" text-anchor="middle" fill="#222">PDF</text></svg>
<div class="t" style="left:886px;top:56px;font-size:27px;color:#484848;letter-spacing:0.1px">Evans and Maunder 1903 Experiments as to the Actuality of the 'Canals' observed on Mars.pdf</div>

<!-- ===== TAB BAR ===== -->
<div class="t" style="left:68px;top:109px;font-size:32px;color:#4e4e4e">Home</div>
<div class="t" style="left:212px;top:109px;font-size:32px;color:#4e4e4e">Tools</div>
<div class="t" style="left:400px;top:114px;font-size:28.5px;color:#2e2e2e">Evans and Maund…</div>
<svg style="left:672px;top:119px" width="18" height="17" viewBox="0 0 18 17"><path d="M2 1.5 L16 15.5 M16 1.5 L2 15.5" stroke="#444" stroke-width="2.8"/></svg>
<!-- help -->
<svg style="left:2603px;top:102px" width="44" height="44" viewBox="0 0 44 44"><circle cx="22" cy="22" r="19.5" fill="none" stroke="#6e6e6e" stroke-width="3"/><path d="M16.8 17.5 Q16.8 12.2 22 12.2 Q27.2 12.2 27.2 16.8 Q27.2 19.8 23.8 21.5 Q22 22.5 22 26.5" fill="none" stroke="#6e6e6e" stroke-width="3.8"/><circle cx="22" cy="31.2" r="2.5" fill="#6e6e6e"/></svg>
<!-- bell -->
<svg style="left:2689px;top:104px" width="36" height="42" viewBox="0 0 36 42"><rect x="16" y="1" width="4" height="5" fill="#6e6e6e"/><path d="M18 4 Q7 5 7 17 V27 L1 33 H35 L29 27 V17 Q29 5 18 4Z" fill="#6e6e6e"/><path d="M13 36 Q18 41 23 36Z" fill="#6e6e6e"/></svg>
<!-- avatar -->
<svg style="left:2765px;top:101px" width="50" height="50" viewBox="0 0 50 50"><defs><clipPath id="avc"><circle cx="25" cy="25" r="24"/></clipPath></defs><circle cx="25" cy="25" r="24" fill="#00c9f5"/><path d="M14 28 L25 0 L50 0 L50 28Z" fill="#00a8cc" clip-path="url(#avc)"/></svg>

<!-- ===== TOOLBAR ===== -->
<g id="tb"></g>
<!-- save (disabled) -->
<svg style="left:63px;top:187px" width="42" height="42" viewBox="0 0 42 42"><path d="M3 5 Q3 2.5 5.5 2.5 H30 L39.5 12 V37 Q39.5 39.5 37 39.5 H5.5 Q3 39.5 3 37Z" fill="none" stroke="#b4b4b4" stroke-width="3.2"/><rect x="11" y="2.5" width="17" height="10" fill="none" stroke="#b4b4b4" stroke-width="3"/><rect x="20" y="5.5" width="3" height="5" fill="#b4b4b4"/><rect x="10" y="24" width="22" height="15.5" fill="#e6e6e6" stroke="#b4b4b4" stroke-width="3"/></svg>
<!-- cloud upload -->
<svg style="left:148px;top:186px" width="48" height="45" viewBox="0 0 48 45"><path d="M16 33 H11 Q2 33 2 24.5 Q2 16.5 10.5 16 Q12 5 23 4.5 Q34 5 36 15.5 Q46 16.5 46 25 Q46 33 37 33 H32" fill="none" stroke="#6e6e6e" stroke-width="3.2" stroke-linecap="round"/><path d="M24 44 V19 M16 27 L24 19 L32 27" fill="none" stroke="#6e6e6e" stroke-width="3.4" stroke-linecap="round" stroke-linejoin="round"/></svg>
<!-- print -->
<svg style="left:235px;top:185px" width="46" height="43" viewBox="0 0 46 43"><rect x="10" y="2" width="26" height="13" rx="2" fill="none" stroke="#6e6e6e" stroke-width="3.4"/><path d="M5 13 H41 Q45 13 45 17 V31 Q45 34 41 34 H5 Q1 34 1 31 V17 Q1 13 5 13Z" fill="#6e6e6e"/><rect x="38" y="17" width="3" height="2.5" fill="#fafafa"/><rect x="10" y="24" width="26" height="17" rx="1.5" fill="#fafafa" stroke="#6e6e6e" stroke-width="3.4"/><rect x="11.7" y="25.7" width="22.6" height="4" fill="#e6e6e6"/><path d="M17 31.5 H29 M17 35.5 H29" stroke="#6e6e6e" stroke-width="2"/></svg>
<!-- mail -->
<svg style="left:325px;top:189px" width="46" height="36" viewBox="0 0 46 36"><rect x="2" y="2" width="42" height="32" rx="2" fill="none" stroke="#6e6e6e" stroke-width="3.4"/><path d="M4 4 L23 20 L42 4 M4 32 L17 17 M42 32 L29 17" fill="none" stroke="#6e6e6e" stroke-width="2.2"/></svg>
<!-- search -->
<svg style="left:413px;top:186px" width="46" height="44" viewBox="0 0 46 44"><circle cx="18" cy="18" r="15" fill="none" stroke="#6e6e6e" stroke-width="3.4"/><path d="M29 29 L43 42" stroke="#6e6e6e" stroke-width="3.6" stroke-linecap="round"/></svg>
<!-- up -->
<svg style="left:746px;top:186px" width="43" height="43" viewBox="0 0 43 43"><circle cx="21.5" cy="21.5" r="19" fill="none" stroke="#6e6e6e" stroke-width="3.4"/><path d="M21.5 33 V11 M12.5 20 L21.5 11 L30.5 20" fill="none" stroke="#6e6e6e" stroke-width="3.6" stroke-linecap="round" stroke-linejoin="round"/></svg>
<!-- down -->
<svg style="left:834px;top:186px" width="43" height="43" viewBox="0 0 43 43"><circle cx="21.5" cy="21.5" r="19" fill="none" stroke="#6e6e6e" stroke-width="3.4"/><path d="M21.5 10 V32 M12.5 23 L21.5 32 L30.5 23" fill="none" stroke="#6e6e6e" stroke-width="3.6" stroke-linecap="round" stroke-linejoin="round"/></svg>
<div class="t" style="left:939px;top:198px;font-size:24px;color:#444">494A</div>
<div class="a" style="left:920px;top:234px;width:98px;height:2px;background:#c8c8c8"></div>
<div class="t" style="left:1030px;top:198.5px;font-size:23.5px;color:#444">(8 of 14)</div>
<div class="a" style="left:1168px;top:180px;width:2px;height:55px;background:#d0d0d0"></div>
<!-- arrow (selected) -->
<svg style="left:1222px;top:186px" width="28" height="43" viewBox="0 0 28 43"><path d="M3 2.5 L25.5 23.5 L15.5 24.5 L21 37.5 Q21.5 40 19 40.5 Q17 41 16 38.5 L10.5 26 L3 32.5Z" fill="#1f73d6" stroke="#1f73d6" stroke-width="2.5" stroke-linejoin="round"/></svg>
<!-- hand -->
<svg style="left:1299px;top:183px" width="46" height="50" viewBox="0 0 46 50"><path d="M12 27 V9 Q12 6 15 6 Q18 6 18 9 V24 M18 22 V5 Q18 2 21 2 Q24 2 24 5 V22 M24 22 V6 Q24 3 27 3 Q30 3 30 6 V23 M30 23 V10 Q30 7 33 7 Q36 7 36 10 V30 Q36 46 22 47 Q11 47 6 37 L2 30 Q1 27 4 26 Q7 25 9 28 L12 32" fill="none" stroke="#6e6e6e" stroke-width="3.2" stroke-linecap="round" stroke-linejoin="round"/></svg>
<!-- zoom out -->
<svg style="left:1388px;top:185px" width="44" height="44" viewBox="0 0 44 44"><circle cx="22" cy="22" r="19.5" fill="none" stroke="#6e6e6e" stroke-width="3.4"/><path d="M12 22 H32" stroke="#6e6e6e" stroke-width="4" stroke-linecap="round"/></svg>
<!-- zoom in -->
<svg style="left:1476px;top:185px" width="44" height="44" viewBox="0 0 44 44"><circle cx="22" cy="22" r="19.5" fill="none" stroke="#6e6e6e" stroke-width="3.4"/><path d="M12 22 H32 M22 12 V32" stroke="#6e6e6e" stroke-width="4" stroke-linecap="round"/></svg>
<div class="t" style="left:1581px;top:198px;font-size:24px;color:#444">150%</div>
<svg style="left:1685px;top:203px" width="16" height="10" viewBox="0 0 16 10"><path d="M0 0 H16 L8 9Z" fill="#6e6e6e"/></svg>
<div class="a" style="left:1562px;top:234px;width:154px;height:2px;background:#c8c8c8"></div>
<!-- fit width -->
<svg style="left:1760px;top:182px" width="38" height="52" viewBox="0 0 38 52"><path d="M3 1 V14 H35 V1" fill="none" stroke="#6e6e6e" stroke-width="3.4"/><rect x="3" y="16" width="32" height="3" fill="#dcdcdc"/><path d="M3 50 V24 H22 L35 36 V50" fill="none" stroke="#6e6e6e" stroke-width="3.4"/><path d="M22 24 V36 H35" fill="none" stroke="#6e6e6e" stroke-width="2.4"/><path d="M9 43 H29 M13 39 L9 43 L13 47 M25 39 L29 43 L25 47" fill="none" stroke="#6e6e6e" stroke-width="2.2"/></svg>
<svg style="left:1807px;top:203px" width="16" height="10" viewBox="0 0 16 10"><path d="M0 0 H16 L8 9Z" fill="#6e6e6e"/></svg>
<!-- scroll mode -->
<svg style="left:1868px;top:187px" width="48" height="44" viewBox="0 0 48 44"><rect x="3" y="2" width="42" height="15" rx="3" fill="none" stroke="#6e6e6e" stroke-width="3.4"/><rect x="11" y="7" width="3" height="5" rx="1" fill="#6e6e6e"/><rect x="19" y="7" width="3" height="5" rx="1" fill="#6e6e6e"/><rect x="27" y="7" width="3" height="5" rx="1" fill="#6e6e6e"/><rect x="35" y="7" width="3" height="5" rx="1" fill="#6e6e6e"/><path d="M24 21 V41 M16 33 L24 41 L32 33" fill="none" stroke="#6e6e6e" stroke-width="3.4" stroke-linecap="round"/></svg>
<div class="a" style="left:1956px;top:180px;width:2px;height:55px;background:#d0d0d0"></div>
<!-- comment -->
<svg style="left:2000px;top:186px" width="44" height="46" viewBox="0 0 44 46"><path d="M5 2 H39 Q42 2 42 5 V30 Q42 33 39 33 H22 L14 43 V33 H5 Q2 33 2 30 V5 Q2 2 5 2Z" fill="#dedede" stroke="#6e6e6e" stroke-width="3.4" stroke-linejoin="round"/><path d="M9 13 H35 M9 20 H30" stroke="#6e6e6e" stroke-width="2.4"/></svg>
<!-- highlighter -->
<svg style="left:2086px;top:184px" width="48" height="48" viewBox="0 0 48 48"><rect x="10" y="34" width="36" height="10" fill="#dedede"/><path d="M38 3 Q41 1 44 4 Q47 7 44 10 L22 33 L14 26Z" fill="#dedede" stroke="#6e6e6e" stroke-width="3.2" stroke-linejoin="round"/><path d="M14 26 L22 33 L17 37 L10 31Z" fill="#6e6e6e"/><path d="M10 31 L2 39 Q1 42 4 42 H11 L15 37" fill="#6e6e6e"/></svg>
<!-- share -->
<div class="a" style="left:2608px;top:176px;width:206px;height:64px;border-radius:32px;background:#2c81e2"></div>
<svg style="left:2643px;top:191px" width="32" height="32" viewBox="0 0 32 32"><path d="M9 11 H3 V30 H29 V11 H23" fill="none" stroke="#fff" stroke-width="3"/><path d="M16 22 V3 M9.5 9 L16 2.5 L22.5 9" fill="none" stroke="#fff" stroke-width="3"/></svg>
<div class="t" style="left:2695px;top:194px;font-size:30px;font-weight:700;color:#fff;letter-spacing:-0.4px">Share</div>

<!-- ===== DOC AREA ===== -->
<svg style="left:44px;top:989px" width="16" height="25" viewBox="0 0 16 25"><path d="M1 0 L15 12.5 L1 25Z" fill="#6e6e6e"/></svg>
<svg style="left:2725px;top:989px" width="15" height="25" viewBox="0 0 15 25"><path d="M14 0 L0 12.5 L14 25Z" fill="#6e6e6e"/></svg>
<div class="a" style="left:2692px;top:1014px;width:17px;height:40px;border-radius:9px;background:#c3c3c3"></div>
<!-- MNRAS stamp -->
<div class="a" style="left:200px;top:256px;width:150px;height:260px;overflow:hidden">
<svg style="left:0;top:0" width="150" height="260" viewBox="200 256 150 260"><path d="M259.5 200 V470 H293 V200" fill="none" stroke="#0000e0" stroke-width="2.4" stroke-dasharray="6 4.5"/></svg>
<div class="t" style="left:0;top:0;font-family:'Liberation Mono',monospace;font-size:36px;color:#0000ff;transform-origin:0 0;transform:translate(59px,199px) rotate(-90deg)">1903MNRAS</div>
</div>
<!-- ===== RIGHT TOOLS PANEL ===== -->
<!-- 1 export pdf teal -->
<svg style="left:2776px;top:276px" width="48" height="50" viewBox="2776 276 48 50"><path d="M2782 282 H2801 L2812 293 V322 H2782Z" fill="#d6ece8"/><path d="M2798 321.5 H2784 Q2782 321.5 2782 319.5 V284 Q2782 282 2784 282 H2801 L2812 293 V300" fill="none" stroke="#27969a" stroke-width="3.8" stroke-linejoin="round"/><path d="M2799.5 282 V292.5 Q2799.5 295.5 2802.5 295.5 H2812" fill="none" stroke="#27969a" stroke-width="3.8"/><circle cx="2810" cy="313" r="13" fill="#fafafa"/><path d="M2799.5 308.5 Q2803 313.5 2810.5 313.5" fill="none" stroke="#27969a" stroke-width="3.8"/><path d="M2809.5 304 L2819.5 313.5 L2809.5 323.5Z" fill="#27969a" stroke="#27969a" stroke-width="1.5" stroke-linejoin="round"/></svg>
<!-- 2 create pdf red -->
<svg style="left:2774px;top:370px" width="46" height="46" viewBox="0 0 46 46"><path d="M9 13 V40 Q9 43 12 43 H37 Q40 43 40 40 V15 L29 3 H12 Q9 3 9 6" fill="#f7d6d8" stroke="#e04a50" stroke-width="3.4" stroke-linejoin="round"/><path d="M29 3 V15 H40" fill="none" stroke="#e04a50" stroke-width="2.6"/><rect x="2" y="9" width="15" height="12" rx="1" fill="#e04a50"/></svg>
<!-- 3 organize pink -->
<svg style="left:2774px;top:463px" width="46" height="46" viewBox="0 0 46 46"><rect x="2.5" y="2.5" width="41" height="17" rx="3" fill="#f6d6e8" stroke="#d6388f" stroke-width="3.4"/><rect x="2.5" y="25.5" width="17" height="18" rx="3" fill="#f6d6e8" stroke="#d6388f" stroke-width="3.4"/><path d="M27 28 H44 M27 35 H44 M27 42 H44" stroke="#d6388f" stroke-width="2.2"/></svg>
<!-- 4 comment yellow -->
<svg style="left:2777px;top:556px" width="42" height="46" viewBox="0 0 42 46"><path d="M4 1 H38 Q41 1 41 4 V28 Q41 31 38 31 H19 L12 43 V31 H4 Q1 31 1 28 V4 Q1 1 4 1Z" fill="#dfbb38"/><path d="M8 12 H34 M8 19 H29" stroke="#fff" stroke-width="3.4"/></svg>
<!-- 5 combine purple -->
<svg style="left:2772px;top:648px" width="52" height="48" viewBox="0 0 52 48"><path d="M8 6 H18 L26 14 V30 H10 Q8 30 8 28Z" fill="#dcdcf8" stroke="#6b6be6" stroke-width="3.2" stroke-linejoin="round"/><rect x="1" y="6" width="9" height="8" fill="#6b6be6"/><path d="M26 28 V6 Q26 4 28 4 H38 L48 14 V28 Q48 30 46 30 H38" fill="none" stroke="#6b6be6" stroke-width="3.2" stroke-linejoin="round"/><path d="M38 4 V14 H48" fill="none" stroke="#6b6be6" stroke-width="2.4"/><path d="M18 34 H34 L26 44Z" fill="#6b6be6"/><rect x="24" y="24" width="4" height="12" fill="#6b6be6"/></svg>
<!-- 6 compress green -->
<svg style="left:2776px;top:740px" width="46" height="44" viewBox="0 0 46 44"><rect x="26.5" y="2.5" width="17" height="39" rx="3" fill="#e4f3dc" stroke="#7cc856" stroke-width="3.4"/><path d="M3 20 H19 M3 20 V41 H19" fill="none" stroke="#7cc856" stroke-width="3.4" stroke-dasharray="5 4"/><path d="M3 2 L3 15 L16 15Z" fill="#7cc856"/><path d="M6 12 Q12 5 21 6" fill="none" stroke="#7cc856" stroke-width="3.4"/></svg>
<!-- 7 highlighter pink -->
<svg style="left:2775px;top:832px" width="46" height="42" viewBox="0 0 46 42"><rect x="17" y="26" width="27" height="12" rx="1" fill="#d6388f"/><path d="M33 3 Q36 1 39 4 Q42 7 39 10 L19 31 L11 23Z" fill="#f6d6e8" stroke="#d6388f" stroke-width="3.2" stroke-linejoin="round"/><path d="M11 23 L19 31 L14 36 L2 38 Q1 37 2 35Z" fill="#d6388f"/></svg>
<!-- 8 shield blue -->
<svg style="left:2777px;top:922px" width="42" height="50" viewBox="0 0 42 50"><path d="M21 2.5 Q29 7 39 7 V24 Q39 39 21 47.5 Q3 39 3 24 V7 Q13 7 21 2.5Z" fill="#dcdcf8" stroke="#6b6be6" stroke-width="3.4" stroke-linejoin="round"/><path d="M21 2.5 Q29 7 39 7 V24 Q39 39 21 47.5Z" fill="#fafafa"/><path d="M21 2.5 Q29 7 39 7 V24 Q39 39 21 47.5 Q3 39 3 24 V7 Q13 7 21 2.5Z" fill="none" stroke="#6b6be6" stroke-width="3.4" stroke-linejoin="round"/></svg>
<!-- 9 protect pdf red -->
<svg style="left:2776px;top:1012px" width="44" height="50" viewBox="0 0 44 50"><path d="M7 10 V30 Q7 33 10 33 H35 Q38 33 38 30 V13 L28 3 H10 Q7 3 7 6" fill="#f7d6d8" stroke="#e04a50" stroke-width="3.4" stroke-linejoin="round"/><path d="M28 3 V13 H38" fill="none" stroke="#e04a50" stroke-width="2.6"/><rect x="1" y="8" width="15" height="12" rx="1" fill="#e04a50"/><path d="M2 44 H18 M26 44 H40" stroke="#e04a50" stroke-width="3.4"/><circle cx="22" cy="44" r="4" fill="none" stroke="#e04a50" stroke-width="3"/></svg>
<!-- 10 fill & sign purple -->
<svg style="left:2772px;top:1106px" width="52" height="48" viewBox="0 0 52 48"><path d="M30 3 Q33 1 36 4 Q39 7 36 10 L14 34 L4 37 L7 27Z" fill="#e8dcf8" stroke="#9a5ce6" stroke-width="3.2" stroke-linejoin="round"/><path d="M2 43 H20" stroke="#9a5ce6" stroke-width="3.4"/><path d="M22 42 Q26 30 28 34 Q30 42 34 34 Q36 30 37 38 Q38 43 42 36 Q44 32 46 38 Q47 42 50 40" fill="none" stroke="#9a5ce6" stroke-width="3.2"/></svg>
<!-- 11 sign xle purple -->
<svg style="left:2775px;top:1199px" width="46" height="42" viewBox="0 0 46 42"><path d="M4 15 L14 25 M14 15 L4 25" stroke="#9a5ce6" stroke-width="3.2"/><path d="M20 28 Q24 22 24 12 Q24 3 27 3 Q30 4 26 18 Q24 28 27 28 Q30 27 31 20 Q32 16 34 22 Q35 28 38 24 Q40 18 41 24 Q42 29 45 27" fill="none" stroke="#9a5ce6" stroke-width="3.6"/><rect x="2" y="35" width="42" height="4" rx="2" fill="#9a5ce6"/></svg>
<!-- 12 doc comment yellow -->
<svg style="left:2774px;top:1288px" width="48" height="50" viewBox="0 0 48 50"><path d="M3 5 Q3 2.5 5.5 2.5 H21 L33 14.5 V20 M21 42 H5.5 Q3 42 3 39.5Z" fill="#f5f0d4" stroke="#dfbb38" stroke-width="3.4" stroke-linejoin="round"/><path d="M3 5 V39.5 Q3 42 5.5 42 H21" fill="none" stroke="#dfbb38" stroke-width="3.4"/><path d="M21 2.5 V14.5 H33" fill="none" stroke="#dfbb38" stroke-width="2.6"/><path d="M23 22 H45 Q47 22 47 24 V38 Q47 40 45 40 H33 L27 48 V40 H23 Q21 40 21 38 V24 Q21 22 23 22Z" fill="#dfbb38"/><path d="M27 29 H41 M27 34 H38" stroke="#fff" stroke-width="2.4"/></svg>
<!-- 13 wrench plus -->
<svg style="left:2776px;top:1383px" width="48" height="50" viewBox="0 0 48 50"><path d="M37 2 Q29 2 28 10 Q28 12 29 14 L5 34 Q1 38 5 41 Q8 44 11 40 L32 18 Q35 19 37 19 Q44 18 45 10 L39 13 L35 9 L38 3Z" fill="#6e6e6e"/><circle cx="7" cy="38" r="1.8" fill="#fafafa"/><circle cx="34" cy="37" r="12.5" fill="#6e6e6e" stroke="#fafafa" stroke-width="2"/><path d="M34 30 V44 M27 37 H41" stroke="#fafafa" stroke-width="3.6"/></svg>
<div class="a" style="left:2770px;top:1654px;width:56px;height:2px;background:#c4c4c4"></div>
<svg style="left:2789px;top:1685px" width="30" height="34" viewBox="0 0 30 34"><rect x="0.5" y="1" width="5.5" height="32" rx="1.5" fill="#6e6e6e"/><path d="M10 17 H25 M18.5 10 L25.5 17 L18.5 24" fill="none" stroke="#6e6e6e" stroke-width="4"/></svg>

<!--/CHROME-->
</body></html>
